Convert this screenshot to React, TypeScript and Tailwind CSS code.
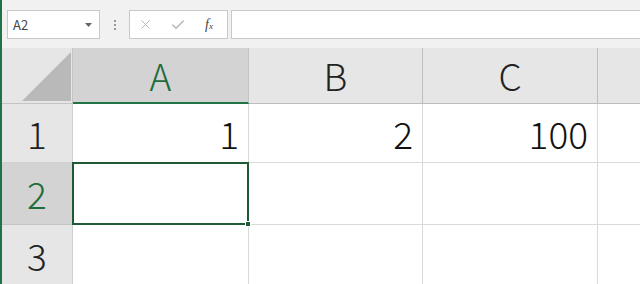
import { X, Check } from "lucide-react";

const big = { fontFamily: '"Noto Sans CJK JP", "Noto Sans", sans-serif' };

const cols = ["A", "B", "C"];
const rows = [
  { n: "1", h: "h-[59px]", vals: ["1", "2", "100"] },
  { n: "2", h: "h-[62px]", vals: ["", "", ""] },
  { n: "3", h: "h-[62px]", vals: ["", "", ""] },
];

export default function App() {
  return (
    <div
      className="w-[640px] h-[284px] overflow-hidden bg-[#f1f1f1] border-l-2 border-[#217346] flex flex-col"
      style={{ fontFamily: '"Noto Sans CJK JP", "Noto Sans", sans-serif' }}
    >
      {/* formula bar */}
      <div className="flex items-center h-[29px] mt-[10px] pl-[5px]">
        <div className="w-[93px] h-[29px] bg-white border border-[#c8c8c8] flex items-center justify-between pl-[5px] pr-[7px]">
          <span className="text-[13px] text-[#444] leading-none">A2</span>
          <svg width="7" height="4" viewBox="0 0 7 4">
            <path d="M0 0h7L3.5 4z" fill="#666" />
          </svg>
        </div>
        <div className="w-[29px] flex flex-col items-center gap-[2px]">
          <div className="w-[2px] h-[2px] bg-[#9a9a9a]" />
          <div className="w-[2px] h-[2px] bg-[#9a9a9a]" />
          <div className="w-[2px] h-[2px] bg-[#9a9a9a]" />
        </div>
        <div className="w-[99px] h-[29px] bg-white border border-[#c8c8c8] flex items-center pl-[8px]">
          <X size={15} strokeWidth={1.5} className="text-[#b4b4b4]" />
          <Check size={16} strokeWidth={2} className="text-[#b4b4b4] ml-[17px]" />
          <span
            className="ml-[19px] text-[14px] text-[#444] italic leading-none"
            style={{ fontFamily: '"Liberation Serif", serif' }}
          >
            f<span className="text-[9px]">x</span>
          </span>
        </div>
        <div className="ml-[3px] flex-1 h-[29px] bg-white border border-[#c8c8c8] border-r-0" />
      </div>

      {/* sheet */}
      <div className="mt-[9px] flex-1 grid grid-cols-[71px_176px_174px_175px_1fr] grid-rows-[56px_auto] font-light" style={big}>
        <div className="bg-[#e6e6e6] border-r border-b border-[#c4c4c4] relative">
          <svg className="absolute left-[20px] top-[4px]" width="49" height="49" viewBox="0 0 49 49">
            <path d="M49 0V49H0z" fill="#b9b9b9" />
          </svg>
        </div>
        {cols.map((c, i) => (
          <div
            key={c}
            className={
              i === 0
                ? "bg-[#d3d3d3] border-r border-[#c4c4c4] border-b-2 border-b-[#217346] flex items-center justify-center text-[37px] text-[#1f6b3b]"
                : "bg-[#e6e6e6] border-r border-b border-[#bdbdbd] flex items-center justify-center text-[37px] text-[#222]"
            }
          >
            <span className="leading-none">{c}</span>
          </div>
        ))}
        <div className="bg-[#e6e6e6] border-b border-[#bdbdbd]" />

        {rows.map((r) => (
          <div key={r.n} className="contents">
            <div
              className={
                r.n === "2"
                  ? `${r.h} bg-[#d3d3d3] border-r border-b border-[#c4c4c4] flex items-center justify-center text-[37px] text-[#1f6b3b]`
                  : `${r.h} bg-[#e6e6e6] border-r border-b border-[#d0d0d0] flex items-center justify-center text-[37px] text-[#222]`
              }
            >
              <span className="leading-none">{r.n}</span>
            </div>
            {r.vals.map((v, i) => (
              <div
                key={i}
                className={`${r.h} bg-white border-r border-b border-[#dadada] flex items-center justify-end pr-[9px] text-[37px] text-[#111] relative ${r.n === "2" && i === 0 ? "z-10" : ""}`}
              >
                <span className="leading-none">{v}</span>
                {r.n === "2" && i === 0 && (
                  <div className="absolute -left-px -top-px -right-px -bottom-px border-2 border-[#1d5a35]">
                    <div className="absolute -right-[4px] -bottom-[4px] w-[6px] h-[6px] bg-[#1d5a35] border border-white" />
                  </div>
                )}
              </div>
            ))}
            <div className={`${r.h} bg-white border-b border-[#dadada]`} />
          </div>
        ))}
      </div>
    </div>
  );
}
